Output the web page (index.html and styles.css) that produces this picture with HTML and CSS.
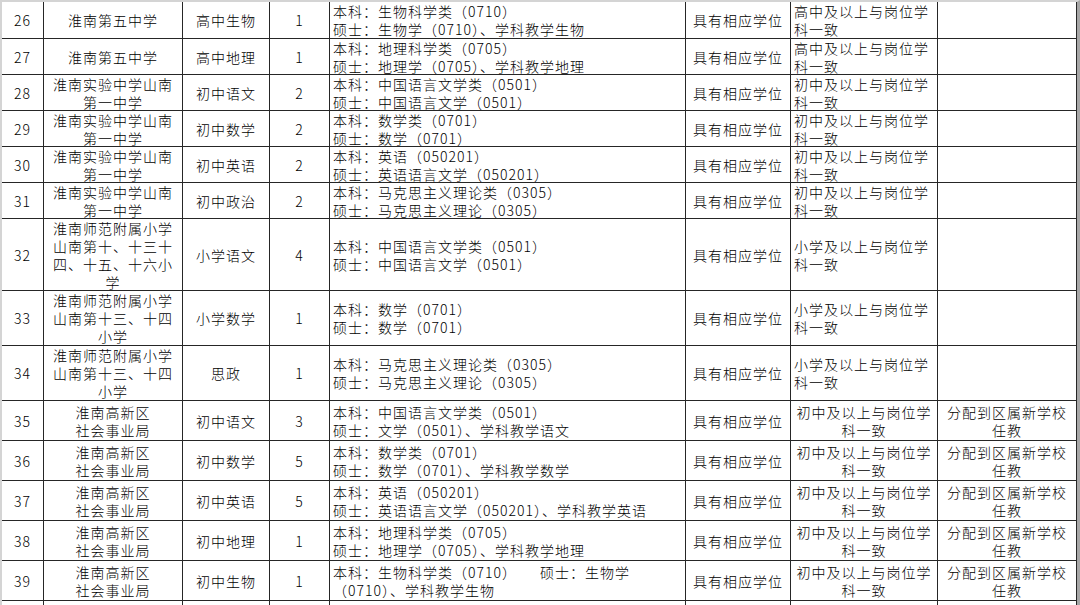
FILE: index.html
```html
<!DOCTYPE html>
<html lang="zh-CN">
<head>
<meta charset="utf-8">
<title>招聘岗位表</title>
<link rel="stylesheet" href="styles.css">
</head>
<body>
<div class="sheet">
  <div class="grid">
    <div class="c r1">26</div><div class="c r1">淮南第五中学</div><div class="c r1">高中生物</div><div class="c r1">1</div><div class="c r1 l">本科：生物科学类（0710）<br>硕士：生物学（0710）、学科教学生物</div><div class="c r1">具有相应学位</div><div class="c r1 l">高中及以上与岗位学<br>科一致</div><div class="c r1"></div>

    <div class="c">27</div><div class="c">淮南第五中学</div><div class="c">高中地理</div><div class="c">1</div><div class="c l">本科：地理科学类（0705）<br>硕士：地理学（0705）、学科教学地理</div><div class="c">具有相应学位</div><div class="c l">高中及以上与岗位学<br>科一致</div><div class="c"></div>

    <div class="c">28</div><div class="c">淮南实验中学山南<br>第一中学</div><div class="c">初中语文</div><div class="c">2</div><div class="c l">本科：中国语言文学类（0501）<br>硕士：中国语言文学（0501）</div><div class="c">具有相应学位</div><div class="c l">初中及以上与岗位学<br>科一致</div><div class="c"></div>

    <div class="c">29</div><div class="c">淮南实验中学山南<br>第一中学</div><div class="c">初中数学</div><div class="c">2</div><div class="c l">本科：数学类（0701）<br>硕士：数学（0701）</div><div class="c">具有相应学位</div><div class="c l">初中及以上与岗位学<br>科一致</div><div class="c"></div>

    <div class="c">30</div><div class="c">淮南实验中学山南<br>第一中学</div><div class="c">初中英语</div><div class="c">2</div><div class="c l">本科：英语（050201）<br>硕士：英语语言文学（050201）</div><div class="c">具有相应学位</div><div class="c l">初中及以上与岗位学<br>科一致</div><div class="c"></div>

    <div class="c">31</div><div class="c">淮南实验中学山南<br>第一中学</div><div class="c">初中政治</div><div class="c">2</div><div class="c l">本科：马克思主义理论类（0305）<br>硕士：马克思主义理论（0305）</div><div class="c">具有相应学位</div><div class="c l">初中及以上与岗位学<br>科一致</div><div class="c"></div>

    <div class="c">32</div><div class="c">淮南师范附属小学<br>山南第十、十三十<br>四、十五、十六小<br>学</div><div class="c">小学语文</div><div class="c">4</div><div class="c l">本科：中国语言文学类（0501）<br>硕士：中国语言文学（0501）</div><div class="c">具有相应学位</div><div class="c l">小学及以上与岗位学<br>科一致</div><div class="c"></div>

    <div class="c">33</div><div class="c">淮南师范附属小学<br>山南第十三、十四<br>小学</div><div class="c">小学数学</div><div class="c">1</div><div class="c l">本科：数学（0701）<br>硕士：数学（0701）</div><div class="c">具有相应学位</div><div class="c l">小学及以上与岗位学<br>科一致</div><div class="c"></div>

    <div class="c">34</div><div class="c">淮南师范附属小学<br>山南第十三、十四<br>小学</div><div class="c">思政</div><div class="c">1</div><div class="c l">本科：马克思主义理论类（0305）<br>硕士：马克思主义理论（0305）</div><div class="c">具有相应学位</div><div class="c l">小学及以上与岗位学<br>科一致</div><div class="c"></div>

    <div class="c">35</div><div class="c">淮南高新区<br>社会事业局</div><div class="c">初中语文</div><div class="c">3</div><div class="c l">本科：中国语言文学类（0501）<br>硕士：文学（0501）、学科教学语文</div><div class="c">具有相应学位</div><div class="c">初中及以上与岗位学<br>科一致</div><div class="c">分配到区属新学校<br>任教</div>

    <div class="c">36</div><div class="c">淮南高新区<br>社会事业局</div><div class="c">初中数学</div><div class="c">5</div><div class="c l">本科：数学类（0701）<br>硕士：数学（0701）、学科教学数学</div><div class="c">具有相应学位</div><div class="c">初中及以上与岗位学<br>科一致</div><div class="c">分配到区属新学校<br>任教</div>

    <div class="c">37</div><div class="c">淮南高新区<br>社会事业局</div><div class="c">初中英语</div><div class="c">5</div><div class="c l">本科：英语（050201）<br>硕士：英语语言文学（050201）、学科教学英语</div><div class="c">具有相应学位</div><div class="c">初中及以上与岗位学<br>科一致</div><div class="c">分配到区属新学校<br>任教</div>

    <div class="c">38</div><div class="c">淮南高新区<br>社会事业局</div><div class="c">初中地理</div><div class="c">1</div><div class="c l">本科：地理科学类（0705）<br>硕士：地理学（0705）、学科教学地理</div><div class="c">具有相应学位</div><div class="c">初中及以上与岗位学<br>科一致</div><div class="c">分配到区属新学校<br>任教</div>

    <div class="c">39</div><div class="c">淮南高新区<br>社会事业局</div><div class="c">初中生物</div><div class="c">1</div><div class="c l">本科：生物科学类（0710）　　硕士：生物学<br>（0710）、学科教学生物</div><div class="c">具有相应学位</div><div class="c">初中及以上与岗位学<br>科一致</div><div class="c">分配到区属新学校<br>任教</div>

    <div class="c"></div><div class="c"></div><div class="c"></div><div class="c"></div><div class="c"></div><div class="c"></div><div class="c"></div><div class="c"></div>
  </div>
</div>
</body>
</html>
```
FILE: styles.css
```css
html, body {
  margin: 0;
  padding: 0;
  background: #ffffff;
}

.sheet {
  width: 1080px;
  height: 605px;
  box-sizing: border-box;
  border-top: 2px solid #d4d4d4;
  border-left: 2px solid #d4d4d4;
  border-right: 3px solid #a6a6a6;
  overflow: hidden;
  font-family: "Noto Sans CJK SC", "Noto Sans", sans-serif;
  font-size: 14px;
  font-weight: 300;
  letter-spacing: 1px;
  line-height: 18px;
  color: #000000;
}

.grid {
  display: grid;
  grid-template-columns: 42px 139px 87px 60px 356px 105px 147px 139px;
  grid-template-rows: 37px 36px 36px 36px 36px 36px 72px 55px 55px 40px 40px 40px 40px 40px 40px;
}

.c {
  box-sizing: border-box;
  border-right: 1px solid #262626;
  border-bottom: 1px solid #262626;
  display: flex;
  align-items: center;
  justify-content: center;
  text-align: center;
  white-space: nowrap;
  overflow: hidden;
}

.c.l {
  justify-content: flex-start;
  text-align: left;
  padding-left: 3px;
}
```
